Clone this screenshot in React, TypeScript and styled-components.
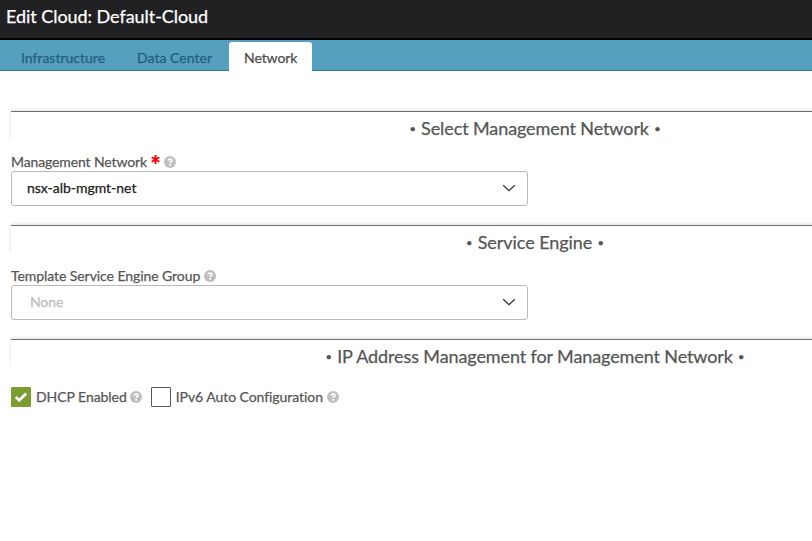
import React from "react";
import styled, { createGlobalStyle } from "styled-components";

const GlobalStyle = createGlobalStyle`
  * { box-sizing: border-box; }
  html, body { margin: 0; padding: 0; background: #fff; }
  body {
    overflow: hidden;
    font-family: Lato, "Open Sans", sans-serif;
    font-size: 14px;
    color: #565656;
  }
`;

const Page = styled.div`
  width: 812px;
  height: 541px;
  overflow: hidden;
  background: #fff;
`;

const TitleBar = styled.header`
  height: 40px;
  padding: 4px 0 0 6px;
  background: #212124;
  border-bottom: 2px solid #000;
`;

const Text = styled.span<{ $spacing?: number }>`
  display: block;
  white-space: nowrap;
  letter-spacing: ${(p) => p.$spacing ?? 0}px;
  -webkit-text-stroke: 0.25px currentColor;
`;

const Title = styled.h1`
  margin: 0;
  font-size: 18px;
  font-weight: 400;
  line-height: 24px;
  color: #fff;
`;

const TabBar = styled.nav`
  display: flex;
  height: 31px;
  padding: 2px 0 0 6px;
  background: #559fbf;
  box-shadow: inset 0 -1px 0 #31789b;
`;

const Tab = styled.div<{ $width: number; $active?: boolean }>`
  width: ${(p) => p.$width}px;
  height: 29px;
  padding: 6px 0 0 15px;
  line-height: 20px;
  border-radius: 3px 3px 0 0;
  color: ${(p) => (p.$active ? "#4c4c4c" : "#235f7c")};
  background: ${(p) => (p.$active ? "#fff" : "transparent")};
`;

const Form = styled.main`
  padding: 40px 0 0 11px;
`;

const SectionHeading = styled.h2`
  display: flex;
  justify-content: center;
  gap: 5px;
  width: 1048px;
  height: 29px;
  margin: 0;
  padding-top: 4px;
  border-top: 1px solid #707070;
  box-shadow: 0 -1px 4px rgba(0, 0, 0, 0.12);
  clip-path: inset(-6px -4px 0 -4px);
  font-size: 18px;
  font-weight: 400;
  line-height: 24px;
`;

const Bullet = styled.span`
  font-size: 12px;
  line-height: 26px;
`;

const Field = styled.div`
  width: 517px;
  height: 85px;
  padding-top: 13px;
`;

const Label = styled.div`
  display: flex;
  align-items: center;
  height: 18px;
  line-height: 18px;
`;

const Required = styled.svg`
  margin: -6px 4px 0 4px;
`;

const Select = styled.div<{ $empty?: boolean }>`
  display: flex;
  align-items: center;
  justify-content: space-between;
  height: 35px;
  padding: 0 11px 1px ${(p) => (p.$empty ? 18 : 15)}px;
  border: 1px solid #b9b9b9;
  border-radius: 3px;
  line-height: 16px;
  color: ${(p) => (p.$empty ? "#bdbdbd" : "#202020")};
`;

const Options = styled.div`
  display: flex;
  align-items: center;
  height: 20px;
  margin-top: 19px;
`;

const Option = styled.label`
  display: flex;
  align-items: center;
  gap: 5px;
  height: 20px;
  margin-right: 9px;
  line-height: 18px;

  > ${Text} {
    padding-bottom: 1px;
  }
`;

const Box = styled.span<{ $checked?: boolean }>`
  display: grid;
  place-items: center;
  width: 20px;
  height: 20px;
  border: 1px solid ${(p) => (p.$checked ? "#7a9e30" : "#565656")};
  border-radius: 1px;
  background: ${(p) => (p.$checked ? "#7a9e30" : "#fff")};
`;

const HelpMark = styled.svg<{ $gap?: number }>`
  flex: none;
  margin-left: ${(p) => p.$gap ?? 0}px;
`;

const Help = ({ gap }: { gap?: number }) => (
  <HelpMark $gap={gap} width="12" height="12" viewBox="0 0 12 12">
    <circle cx="6" cy="6" r="6" fill="#bfbfbf" />
    <path d="M4.1 4.6C4.3 2.6 7.9 2.6 7.9 4.6C7.9 5.8 6.1 5.8 6.1 7.1" fill="none" stroke="#fff" strokeWidth="1.7" />
    <rect x="5.2" y="8" width="1.8" height="1.7" fill="#fff" />
  </HelpMark>
);

const Chevron = () => (
  <svg width="14" height="8" viewBox="0 0 14 8">
    <path d="M1.2 1.3L7 6.7L12.8 1.3" fill="none" stroke="#333" strokeWidth="1.3" />
  </svg>
);

const Section = ({ title, spacing }: { title: string; spacing: number }) => (
  <SectionHeading>
    <Bullet>•</Bullet>
    <Text $spacing={spacing}>{title}</Text>
    <Bullet>•</Bullet>
  </SectionHeading>
);

export default function App() {
  return (
    <>
      <GlobalStyle />
      <Page>
        <TitleBar>
          <Title><Text $spacing={-0.05}>Edit Cloud: Default-Cloud</Text></Title>
        </TitleBar>
        <TabBar>
          <Tab $width={116}><Text>Infrastructure</Text></Tab>
          <Tab $width={107}><Text $spacing={0.04}>Data Center</Text></Tab>
          <Tab $width={83} $active><Text $spacing={-0.08}>Network</Text></Tab>
        </TabBar>
        <Form>
          <Section title="Select Management Network" spacing={-0.1} />
          <Field>
            <Label>
              <Text $spacing={-0.12}>Management Network</Text>
              <Required width="9" height="9" viewBox="0 0 8 8">
                <path d="M4 0V8M0.6 2L7.4 6M7.4 2L0.6 6" stroke="#f00" strokeWidth="1.7" />
              </Required>
              <Help />
            </Label>
            <Select><Text $spacing={-0.02}>nsx-alb-mgmt-net</Text><Chevron /></Select>
          </Field>
          <Section title="Service Engine" spacing={-0.05} />
          <Field>
            <Label><Text $spacing={-0.07}>Template Service Engine Group</Text><Help gap={4} /></Label>
            <Select $empty><Text $spacing={-0.1}>None</Text><Chevron /></Select>
          </Field>
          <Section title="IP Address Management for Management Network" spacing={-0.11} />
          <Options>
            <Option>
              <Box $checked>
                <svg width="14" height="12" viewBox="0 0 14 12">
                  <path d="M1.8 6.1L5.2 9.4L12.2 2.4" fill="none" stroke="#fff" strokeWidth="2.8" />
                </svg>
              </Box>
              <Text $spacing={-0.05}>DHCP Enabled</Text><Help gap={-2} />
            </Option>
            <Option>
              <Box />
              <Text $spacing={-0.06}>IPv6 Auto Configuration</Text><Help gap={-1} />
            </Option>
          </Options>
        </Form>
      </Page>
    </>
  );
}
